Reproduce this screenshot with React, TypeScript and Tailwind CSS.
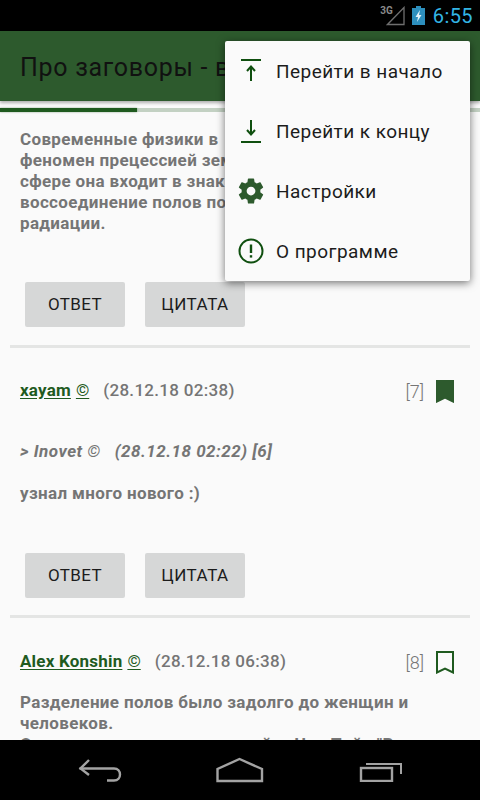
const GREEN = "#2d5a2d";

function StatusBar() {
  return (
    <div className="flex h-[31px] shrink-0 items-center justify-end bg-black pr-[7px]">
      <span className="mb-[10px] mr-[-7px] font-['Roboto',sans-serif] text-[10px] font-bold leading-[10px] text-[#8a8a8a]">3G</span>
      <svg width="20" height="20" viewBox="0 0 20 20" className="mr-[6px] mt-[1px]">
        <path d="M18 1.5V18.5H1.5Z" fill="none" stroke="#6f6f6f" strokeWidth="1.3" />
      </svg>
      <svg width="13" height="19" viewBox="0 0 13 19" className="mr-[8px]">
        <rect x="4" y="0" width="5" height="2" fill="#2d8fbd" />
        <rect x="0" y="2" width="13" height="17" fill="#2d8fbd" />
        <path d="M8 4L3.5 11H6L5 16L9.5 9H7Z" fill="#e4f3fa" />
      </svg>
      <span className="font-['Roboto',sans-serif] text-[20px] leading-[24px] tracking-[0.4px] text-[#33b5e5]">6:55</span>
    </div>
  );
}

function ActionButtons() {
  return (
    <div className="flex gap-[20px] pl-[25px]">
      <div className="flex h-[45px] w-[100px] items-center justify-center rounded-[2px] bg-[#d6d7d7] pt-[1px] text-[17px] tracking-[0.4px] text-[#1c1c1c]">ОТВЕТ</div>
      <div className="flex h-[45px] w-[100px] items-center justify-center rounded-[2px] bg-[#d6d7d7] pt-[1px] text-[17px] tracking-[0.5px] text-[#1c1c1c]">ЦИТАТА</div>
    </div>
  );
}

function Bookmark({ filled }: { filled?: boolean }) {
  return (
    <svg width="18" height="23" viewBox="0 0 18 23" className="ml-[11px]">
      <path
        d="M1 1H17V21.5L9 17.5L1 21.5Z"
        fill={filled ? GREEN : "none"}
        stroke={filled ? GREEN : "#1f5a1f"}
        strokeWidth="2"
      />
    </svg>
  );
}

function PostHeader({ author, date, num, filled }: { author: string; date: string; num: string; filled?: boolean }) {
  return (
    <div className="flex h-[24px] items-center pl-[20px] pr-[26px] text-[17px] text-[#757575]">
      <span className="font-bold tracking-[0.2px] text-[#1f5a1f] underline underline-offset-2">{author}</span>
      <span className="ml-[5px] text-[#1f5a1f] underline underline-offset-2">©</span>
      <span className="ml-[14px] font-medium tracking-[0.3px]">{date}</span>
      <span className="ml-auto mr-[1px] text-[18px] font-light text-[#757575]">{num}</span>
      <Bookmark filled={filled} />
    </div>
  );
}

function MenuItem({ icon, label }: { icon: React.ReactNode; label: string }) {
  return (
    <div className="flex h-[60px] items-center">
      <div className="flex w-[51px] justify-center">{icon}</div>
      <span className="pt-[3px] text-[19px] tracking-[0.45px] text-[#1c1c1c]">{label}</span>
    </div>
  );
}

function Menu() {
  return (
    <div className="absolute left-[225px] top-[41px] z-10 w-[245px] rounded-[2px] bg-[#fafafa] py-0 shadow-[0_2px_8px_rgba(0,0,0,0.55)]">
      <MenuItem
        label="Перейти в начало"
        icon={
          <svg width="20" height="24" viewBox="0 0 20 24">
            <path d="M0 1H20" stroke="#0f4f0f" strokeWidth="2" />
            <path d="M10 22V8M6 12L10 7.5L14 12" stroke="#0f4f0f" strokeWidth="2" fill="none" />
          </svg>
        }
      />
      <MenuItem
        label="Перейти к концу"
        icon={
          <svg width="20" height="24" viewBox="0 0 20 24">
            <path d="M0 23H20" stroke="#0f4f0f" strokeWidth="2" />
            <path d="M10 1V15M6 11L10 15.5L14 11" stroke="#0f4f0f" strokeWidth="2" fill="none" />
          </svg>
        }
      />
      <MenuItem
        label="Настройки"
        icon={
          <svg width="30" height="30" viewBox="0 0 24 24">
            <path
              fill={GREEN}
              d="M19.43 12.98c.04-.32.07-.64.07-.98s-.03-.66-.07-.98l2.11-1.65c.19-.15.24-.42.12-.64l-2-3.46c-.12-.22-.39-.3-.61-.22l-2.49 1c-.52-.4-1.08-.73-1.69-.98l-.38-2.65C14.46 2.18 14.25 2 14 2h-4c-.25 0-.46.18-.49.42l-.38 2.65c-.61.25-1.17.59-1.69.98l-2.49-1c-.23-.09-.49 0-.61.22l-2 3.46c-.13.22-.07.49.12.64l2.11 1.65c-.04.32-.07.65-.07.98s.03.66.07.98l-2.11 1.65c-.19.15-.24.42-.12.64l2 3.46c.12.22.39.3.61.22l2.49-1c.52.4 1.08.73 1.69.98l.38 2.65c.03.24.24.42.49.42h4c.25 0 .46-.18.49-.42l.38-2.65c.61-.25 1.17-.59 1.69-.98l2.49 1c.23.09.49 0 .61-.22l2-3.46c.12-.22.07-.49-.12-.64l-2.11-1.65zM12 15.5c-1.93 0-3.5-1.57-3.5-3.5s1.57-3.5 3.5-3.5 3.5 1.57 3.5 3.5-1.57 3.5-3.5 3.5z"
            />
          </svg>
        }
      />
      <MenuItem
        label="О программе"
        icon={
          <svg width="26" height="26" viewBox="0 0 26 26">
            <circle cx="13" cy="13" r="11.5" fill="none" stroke="#0f4f0f" strokeWidth="2" />
            <path d="M13 6.5V15" stroke="#0f4f0f" strokeWidth="2.4" />
            <path d="M13 17.2V19.6" stroke="#0f4f0f" strokeWidth="2.4" />
          </svg>
        }
      />
    </div>
  );
}

function NavBar() {
  return (
    <div className="flex h-[60px] shrink-0 items-start bg-black pl-[78px] pt-[18px]">
      <svg width="44" height="26" viewBox="0 0 44 26">
        <path d="M1.5 10.5H36C44 10.5 44 22.5 36 22.5H29" fill="none" stroke="#a3a3a3" strokeWidth="2.4" />
        <path d="M11 2L2.5 10.5L11 17" fill="none" stroke="#a3a3a3" strokeWidth="2.4" />
      </svg>
      <svg width="48" height="26" viewBox="0 0 48 26" className="ml-[94px] -mt-[1px]">
        <path d="M1.5 24V12L23.5 2L46 12V24Z" fill="none" stroke="#a3a3a3" strokeWidth="2.4" />
      </svg>
      <svg width="44" height="24" viewBox="0 0 44 24" className="ml-[95px]">
        <rect x="2" y="10" width="31" height="13" fill="none" stroke="#a3a3a3" strokeWidth="2.4" />
        <path d="M7 6H42V16" fill="none" stroke="#a3a3a3" strokeWidth="2" />
      </svg>
    </div>
  );
}

export default function App() {
  return (
    <div className="relative flex h-[800px] w-[480px] flex-col overflow-hidden bg-[#fafafa] font-['Roboto',sans-serif]">
      <StatusBar />
      <div className="z-[1] flex h-[70px] shrink-0 items-center whitespace-nowrap bg-[#2d5a2d] pl-[20px] pt-[3px] text-[25px] tracking-[0.7px] text-[#111] shadow-[0_2px_3px_rgba(0,0,0,0.3)]">
        Про заговоры - в
      </div>
      <div className="mt-[7px] flex h-[4px] shrink-0 items-center">
        <div className="z-[1] h-[4px] w-[137px] bg-[#1f5a1f] shadow-[0_0_2px_rgba(45,90,45,0.6)]" />
        <div className="h-[4px] flex-1 bg-[#c3d1c3]" />
      </div>
      <div className="min-h-0 flex-1 overflow-hidden">
        <div className="mt-[17px] whitespace-nowrap pl-[20px] text-[17px] font-bold leading-[21px] tracking-[0.35px] text-[#757575]">
          <p>Современные физики в</p>
          <p>феномен прецессией зем</p>
          <p>сфере она входит в знак</p>
          <p>воссоединение полов по</p>
          <p>радиации.</p>
        </div>
        <div className="mt-[48px]">
          <ActionButtons />
        </div>
        <div className="mx-[10px] mt-[18px] h-[3px] bg-[#e4e5e4]" />
        <div className="mt-[31px]">
          <PostHeader author="xayam" date="(28.12.18 02:38)" num="[7]" filled />
        </div>
        <p className="mt-[36px] pl-[20px] text-[17px] font-bold italic leading-[24px] tracking-[0.5px] text-[#757575]">
          &gt; Inovet <span className="font-normal">©</span>&nbsp;&nbsp; (28.12.18 02:22) [6]
        </p>
        <p className="mt-[18px] pl-[20px] text-[17px] font-bold leading-[24px] tracking-[0.35px] text-[#757575]">узнал много нового :)</p>
        <div className="mt-[48px]">
          <ActionButtons />
        </div>
        <div className="mx-[10px] mt-[17px] h-[3px] bg-[#e4e5e4]" />
        <div className="mt-[32px]">
          <PostHeader author="Alex Konshin" date="(28.12.18 06:38)" num="[8]" />
        </div>
        <div className="mt-[18px] pl-[20px] text-[17px] font-bold leading-[21px] tracking-[0.35px] text-[#757575]">
          <p>Разделение полов было задолго до женщин и</p>
          <p>человеков.</p>
          <p className="whitespace-nowrap">О возникновении полов читайте Чак Пайн "Вопрос</p>
        </div>
      </div>
      <NavBar />
      <Menu />
    </div>
  );
}
